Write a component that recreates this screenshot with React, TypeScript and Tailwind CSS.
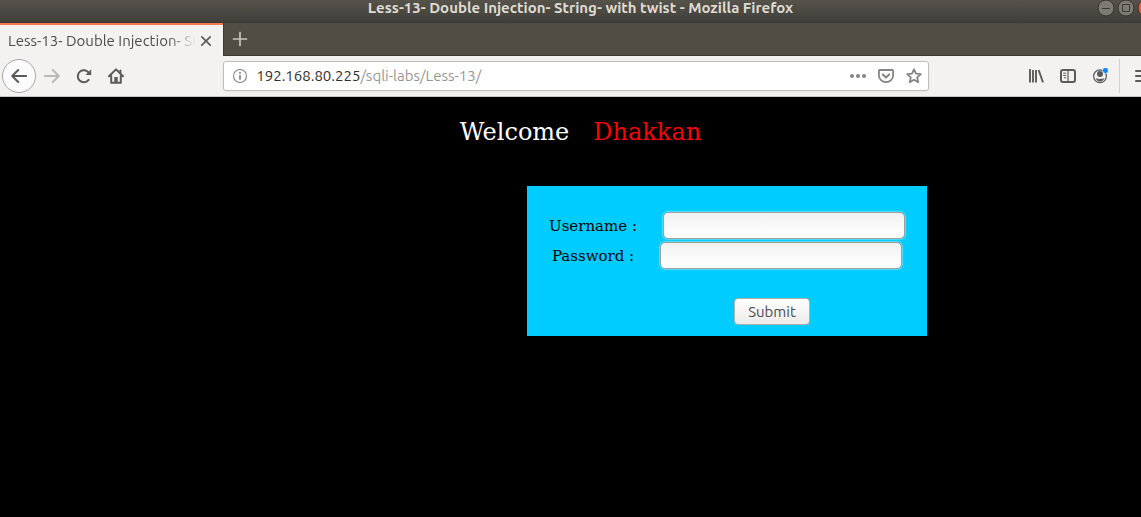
import React from "react";

const uiFont = "font-['Ubuntu','Open_Sans','Noto_Sans',sans-serif]";
const serifFont = "font-['DejaVu_Serif',serif]";

type IconProps = { children: React.ReactNode; className?: string };

function Icon({ children, className = "text-[#5c5b59]" }: IconProps) {
  return (
    <svg
      viewBox="0 0 16 16"
      width="16"
      height="16"
      fill="none"
      stroke="currentColor"
      strokeWidth="2"
      strokeLinecap="round"
      strokeLinejoin="round"
      aria-hidden="true"
      className={`shrink-0 ${className}`}
    >
      {children}
    </svg>
  );
}

function ToolButton({ label, children }: { label: string; children: React.ReactNode }) {
  return (
    <button type="button" aria-label={label} className="flex h-8 w-8 shrink-0 items-center justify-center">
      {children}
    </button>
  );
}

function TitleBar() {
  return (
    <header className="relative h-[23px] overflow-hidden border-b border-[#3a3934] bg-linear-to-b from-[#56534b] to-[#403f3a] pl-5">
      <h1 className="text-center text-[15px] leading-4 font-bold whitespace-nowrap text-[#dfdbd2]">
        Less-13- Double Injection- String- with twist - Mozilla Firefox
      </h1>
      <div className="absolute top-0 -right-[13px] flex gap-1">
        <button type="button" aria-label="Minimize" className="h-4 w-4">
          <svg viewBox="0 0 16 16" className="h-4 w-4 overflow-visible" aria-hidden="true">
            <circle cx="8" cy="8" r="8" fill="#7d7b74" stroke="#35342f" />
            <path d="M4 8.5h8" stroke="#3a3934" />
          </svg>
        </button>
        <button type="button" aria-label="Maximize" className="h-4 w-4">
          <svg viewBox="0 0 16 16" className="h-4 w-4 overflow-visible" aria-hidden="true">
            <circle cx="8" cy="8" r="8" fill="#7d7b74" stroke="#35342f" />
            <path d="M4.5 4.5h7v7h-7z" fill="none" stroke="#3a3934" />
          </svg>
        </button>
        <button type="button" aria-label="Close" className="h-4 w-4">
          <svg viewBox="0 0 16 16" className="h-4 w-4 overflow-visible" aria-hidden="true">
            <circle cx="8" cy="8" r="8" fill="#ee6039" stroke="#35342f" />
          </svg>
        </button>
      </div>
    </header>
  );
}

function TabStrip() {
  return (
    <div className="flex h-[33px] border-b border-[#3a3934] bg-[#504d45]">
      <div className="-mb-px flex w-[223px] shrink-0 items-center border-t-2 border-[#f6794f] bg-[#f3f2f1] pl-2">
        <span className="w-[188px] overflow-hidden mask-r-from-[160px] mask-r-to-[188px] text-[15px] leading-5 whitespace-nowrap text-[#4c4c4c]">
          Less-13- Double Injection- St
        </span>
        <button type="button" aria-label="Close tab" className="flex h-5 w-5 items-center justify-center">
          <Icon>
            <path d="M3.8 3.8l8.4 8.4M12.2 3.8l-8.4 8.4" strokeWidth="1.7" />
          </Icon>
        </button>
      </div>
      <button type="button" aria-label="New tab" className="flex w-8 items-center justify-center border-l border-[#3a3934]">
        <Icon className="text-[#c9c6be]">
          <path d="M8 1.5v13M1.5 8h13" strokeWidth="1.7" />
        </Icon>
      </button>
    </div>
  );
}

function NavBar() {
  return (
    <nav className="flex h-[41px] items-center overflow-hidden border-b border-[#c5c3c0] bg-[#f3f2f1]">
      <div className="flex w-[132px] shrink-0 items-center pl-0.5">
        <button
          type="button"
          aria-label="Back"
          className="flex h-[34px] w-[34px] shrink-0 items-center justify-center rounded-full border border-[#a9a8a6] bg-[#fcfcfc]"
        >
          <Icon>
            <path d="M1.2 8h14M7.2 2L1.2 8l6 6" />
          </Icon>
        </button>
        <ToolButton label="Forward">
          <Icon className="text-[#b9b8b7]">
            <path d="M.8 8h14M8.8 2l6 6-6 6" />
          </Icon>
        </ToolButton>
        <ToolButton label="Reload">
          <Icon>
            <path d="M12.6 11.8A6 6 0 1 1 13 5.2" />
            <path d="M15.2 1.2v5.7H9.5z" fill="currentColor" stroke="none" />
          </Icon>
        </ToolButton>
        <ToolButton label="Home">
          <Icon>
            <path d="M1 8.3L8 1.4l7 6.9M3.2 8v6.7h9.6V8" />
            <path d="M6.3 14V9h3.4v5" fill="currentColor" stroke="none" />
            <path d="M12.4 2.5v2.5" />
          </Icon>
        </ToolButton>
      </div>
      <div className="w-[8%] shrink-0" />
      <div className="flex h-[30px] min-w-0 flex-1 items-center rounded-[3px] border border-[#c1bfbc] bg-white pr-1.5 pl-2 shadow-[0_1px_3px_rgba(0,0,0,0.06)]">
        <Icon className="mr-2 text-[#858483]">
          <circle cx="8" cy="8" r="6.5" strokeWidth="1.1" />
          <path d="M8 7.5V11" strokeWidth="1.7" />
          <circle cx="8" cy="4.8" r="1" fill="currentColor" stroke="none" />
        </Icon>
        <div className="min-w-0 flex-1 overflow-hidden text-[15px] leading-5 whitespace-nowrap text-[#989796]">
          <span className="text-[#2e2e2e]">192.168.80.225</span>/sqli-labs/Less-13/
        </div>
        <div className="flex items-center gap-3 text-[#858483]">
          <button type="button" aria-label="Page actions">
            <Icon className="text-[#858483]">
              <g fill="currentColor" stroke="none">
                <circle cx="2" cy="8" r="2" />
                <circle cx="8" cy="8" r="2" />
                <circle cx="14" cy="8" r="2" />
              </g>
            </Icon>
          </button>
          <button type="button" aria-label="Save to Pocket">
            <Icon className="text-[#858483]">
              <path d="M1.8 2h12.4q.9 0 .9.9V7.2a7.1 6.9 0 0 1-14.2 0V2.9q0-.9.9-.9z" strokeWidth="1.8" />
              <path d="M4.8 6.4L8 9.4l3.2-3" />
            </Icon>
          </button>
          <button type="button" aria-label="Bookmark">
            <Icon className="text-[#858483]">
              <path
                d="M8 1.3l2 4.4 4.8.5-3.6 3.2 1 4.9L8 11.8l-4.2 2.5 1-4.9L1.2 6.2 6 5.7z"
                strokeWidth="1.8"
              />
            </Icon>
          </button>
        </div>
      </div>
      <div className="w-[8%] shrink-0" />
      <div className="flex w-[121px] shrink-0 items-center overflow-hidden">
        <ToolButton label="Library">
          <Icon>
            <path d="M2 1v13.6M5 2v12.6M8 2v12.6M10.6 2l4.4 12.4" strokeWidth="1.9" strokeLinecap="butt" />
          </Icon>
        </ToolButton>
        <ToolButton label="Sidebars">
          <Icon>
            <rect x="1" y="2" width="14" height="12" rx="2" />
            <path d="M8 2v12" strokeWidth="1.2" />
            <path d="M3.2 5.2h3M3.2 7.5h3M4 9.8h2.2" strokeWidth="1" strokeLinecap="butt" />
          </Icon>
        </ToolButton>
        <ToolButton label="Account">
          <Icon>
            <circle cx="8" cy="8.3" r="6.4" strokeWidth="1.2" />
            <circle cx="8" cy="6" r="3" fill="currentColor" stroke="none" />
            <path d="M3.6 10.2q4.4 1.6 8.8 0-1.5 3.4-4.4 3.4t-4.4-3.4z" fill="currentColor" stroke="none" />
            <circle cx="13.5" cy="2.5" r="3" fill="#0a84ff" stroke="#f3f2f1" strokeWidth=".7" />
          </Icon>
        </ToolButton>
        <div className="mr-[7px] ml-[3px] h-[34px] w-px shrink-0 bg-[#d3d2d0]" />
        <ToolButton label="Open menu">
          <Icon>
            <path d="M1 3h14M1 8h14M1 13h14" />
          </Icon>
        </ToolButton>
      </div>
    </nav>
  );
}

const fieldClass =
  "h-[27px] w-[242px] rounded-[5px] border border-[#a19f9c] bg-linear-to-b from-[#f2f2f2] to-white px-2 text-sm shadow-[0_0_1px_1px_rgba(255,255,255,0.35)] outline-none";

function LoginForm() {
  return (
    <form
      onSubmit={(event) => event.preventDefault()}
      className="flex w-[400px] flex-col items-center bg-[#00ccff] pt-[26px] pb-[11px] text-[15px] leading-5 text-black"
    >
      <div className="flex h-[30px] items-start gap-[26px]">
        <label htmlFor="uname" className="pt-1 whitespace-pre">Username :</label>
        <input id="uname" name="uname" type="text" className={fieldClass} />
      </div>
      <div className="flex h-[30px] items-start gap-[26px]">
        <label htmlFor="passwd" className="pt-1 whitespace-pre">Password :</label>
        <input id="passwd" name="passwd" type="password" className={fieldClass} />
      </div>
      <button
        type="submit"
        className={`mt-[26px] ml-[90px] h-[27px] w-[76px] rounded-[4px] border border-[#b3aeaa] bg-linear-to-b from-white to-[#ececeb] text-[15px] leading-5 text-[#4c4c4c] ${uiFont}`}
      >
        Submit
      </button>
    </form>
  );
}

export default function App() {
  return (
    <div className="flex min-h-screen flex-col overflow-hidden bg-black">
      <div className={uiFont}>
        <TitleBar />
        <TabStrip />
        <NavBar />
      </div>
      <main className={`flex-1 pt-[19px] ${serifFont}`}>
        <h2 className="flex justify-center gap-6 pl-5 text-2xl leading-8 text-white">
          Welcome <span className="text-[#ff0000]">Dhakkan</span>
        </h2>
        <div className="mt-[38px] flex justify-center pl-[313px]">
          <LoginForm />
        </div>
      </main>
    </div>
  );
}
